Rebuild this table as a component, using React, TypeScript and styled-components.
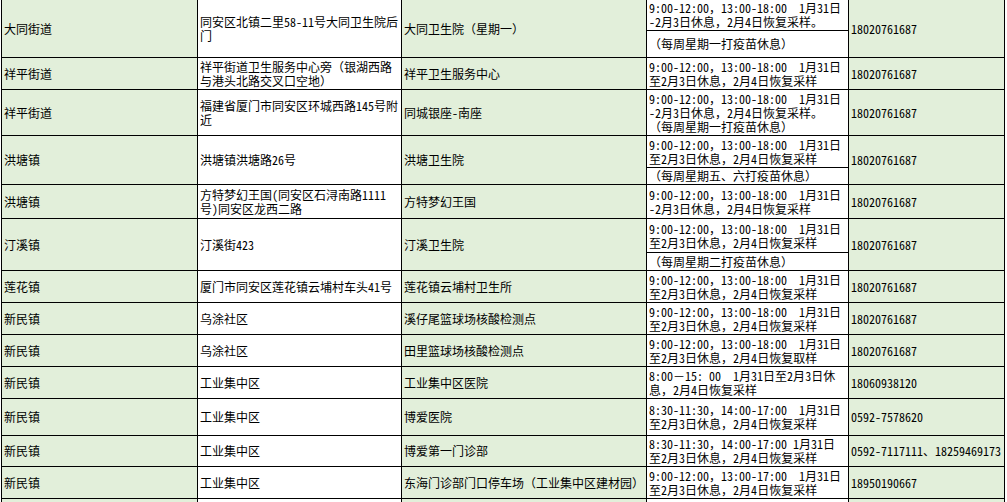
import React from "react";
import styled, { createGlobalStyle } from "styled-components";

const Global = createGlobalStyle`
  html, body {
    margin: 0;
    padding: 0;
    background: #ffffff;
    overflow: hidden;
    height: 100%;
  }
  #root {
    height: 100%;
    overflow: hidden;
  }
`;

type Row = {
  h: number;
  area: string;
  addr: string[];
  site: string[];
  time: string[];
  note?: string;
  noteH?: number;
  phone: string;
};

const T1 = "9:00-12:00，13:00-18:00\u00a0\u00a01月31日";
const TO = "至2月3日休息，2月4日恢复采样";
const DASH = "-2月3日休息，2月4日恢复采样";

const rows: Row[] = [
  {
    h: 57,
    area: "大同街道",
    addr: ["同安区北镇二里58-11号大同卫生院后", "门"],
    site: ["大同卫生院（星期一）"],
    time: [T1, DASH + "。"],
    note: "（每周星期一打疫苗休息）",
    noteH: 26,
    phone: "18020761687",
  },
  {
    h: 31,
    area: "祥平街道",
    addr: ["祥平街道卫生服务中心旁（银湖西路", "与港头北路交叉口空地）"],
    site: ["祥平卫生服务中心"],
    time: [T1, TO],
    phone: "18020761687",
  },
  {
    h: 45,
    area: "祥平街道",
    addr: ["福建省厦门市同安区环城西路145号附", "近"],
    site: ["同城银座-南座"],
    time: [T1, DASH + "。", "（每周星期一打疫苗休息）"],
    phone: "18020761687",
  },
  {
    h: 48,
    area: "洪塘镇",
    addr: ["洪塘镇洪塘路26号"],
    site: ["洪塘卫生院"],
    time: [T1, TO],
    note: "（每周星期五、六打疫苗休息）",
    noteH: 16,
    phone: "18020761687",
  },
  {
    h: 33,
    area: "洪塘镇",
    addr: ["方特梦幻王国(同安区石浔南路1111", "号)同安区龙西二路"],
    site: ["方特梦幻王国"],
    time: [T1, DASH],
    phone: "18020761687",
  },
  {
    h: 51,
    area: "汀溪镇",
    addr: ["汀溪街423"],
    site: ["汀溪卫生院"],
    time: [T1, TO],
    note: "（每周星期二打疫苗休息）",
    noteH: 17,
    phone: "18020761687",
  },
  {
    h: 31,
    area: "莲花镇",
    addr: ["厦门市同安区莲花镇云埔村车头41号"],
    site: ["莲花镇云埔村卫生所"],
    time: [T1, TO],
    phone: "18020761687",
  },
  {
    h: 31,
    area: "新民镇",
    addr: ["乌涂社区"],
    site: ["溪仔尾篮球场核酸检测点"],
    time: [T1, TO],
    phone: "18020761687",
  },
  {
    h: 31,
    area: "新民镇",
    addr: ["乌涂社区"],
    site: ["田里篮球场核酸检测点"],
    time: [T1, "至2月3日休息，2月4日恢复取样"],
    phone: "18020761687",
  },
  {
    h: 31,
    area: "新民镇",
    addr: ["工业集中区"],
    site: ["工业集中区医院"],
    time: ["8:00－15:\u00a000\u00a0\u00a01月31日至2月3日休", "息，2月4日恢复采样"],
    phone: "18060938120",
  },
  {
    h: 36,
    area: "新民镇",
    addr: ["工业集中区"],
    site: ["博爱医院"],
    time: ["8:30-11:30，14:00-17:00\u00a0\u00a01月31日", TO],
    phone: "0592-7578620",
  },
  {
    h: 30,
    area: "新民镇",
    addr: ["工业集中区"],
    site: ["博爱第一门诊部"],
    time: ["8:30-11:30，14:00-17:00\u00a01月31日", TO],
    phone: "0592-7117111、18259469173",
  },
  {
    h: 31,
    area: "新民镇",
    addr: ["工业集中区"],
    site: ["东海门诊部门口停车场（工业集中区建材园）"],
    time: ["9:00-12:00，13:00-17:00\u00a0\u00a01月31日", TO],
    phone: "18950190667",
  },
  {
    h: 30,
    area: "",
    addr: [],
    site: [],
    time: [],
    phone: "",
  },
];

const Sheet = styled.div<{ $rows: string }>`
  display: grid;
  grid-template-columns: 195px 203px 244px 201px 155px;
  grid-template-rows: ${(p) => p.$rows};
  gap: 1px;
  padding: 1px;
  background: #000000;
  width: max-content;
  margin: -1px 0 0 1px;
  font-family: "Noto Sans CJK SC", "Noto Sans", sans-serif;
  font-size: 12px;
  line-height: 14px;
  color: #000000;
`;

const Cell = styled.div<{ $green?: boolean }>`
  background: ${(p) => (p.$green ? "#E2EFDA" : "#FFFFFF")};
  display: flex;
  flex-direction: column;
  justify-content: center;
  align-items: flex-start;
  padding: 0 1px 0 2px;
  overflow: hidden;
  white-space: nowrap;
  min-width: 0;
  min-height: 0;
`;

const TimeCell = styled.div`
  background: #ffffff;
  display: flex;
  flex-direction: column;
  overflow: hidden;
  min-height: 0;
  white-space: nowrap;
`;

const TimeMain = styled.div`
  flex: 1;
  display: flex;
  flex-direction: column;
  justify-content: center;
  padding: 0 1px 0 2px;
  overflow: hidden;
`;

const TimeNote = styled.div<{ $h: number }>`
  height: ${(p) => p.$h}px;
  flex: none;
  border-top: 1px solid #000000;
  display: flex;
  align-items: center;
  padding: 0 1px 0 2px;
  overflow: hidden;
`;

const Line = styled.span`
  display: block;
`;

const Half = styled.span`
  font-feature-settings: "hwid" 1;
`;

const Text = ({ value }: { value: string }) => {
  const parts = value.split(/([\u0020-\u007e\u00a0]+)/).filter((s) => s !== "");
  return (
    <>
      {parts.map((p, i) =>
        /^[\u0020-\u007e\u00a0]+$/.test(p) ? <Half key={i}>{p}</Half> : <React.Fragment key={i}>{p}</React.Fragment>
      )}
    </>
  );
};

const Lines = ({ items }: { items: string[] }) => (
  <>
    {items.map((t, i) => (
      <Line key={i}>
        <Text value={t} />
      </Line>
    ))}
  </>
);

export default function App() {
  const template = rows.map((r) => `${r.h}px`).join(" ");
  return (
    <>
      <Global />
      <Sheet $rows={template}>
        {rows.map((r, i) => (
          <React.Fragment key={i}>
            <Cell $green>
              <Line>{r.area}</Line>
            </Cell>
            <Cell>
              <Lines items={r.addr} />
            </Cell>
            <Cell $green>
              <Lines items={r.site} />
            </Cell>
            <TimeCell>
              <TimeMain>
                <Lines items={r.time} />
              </TimeMain>
              {r.note && (
                <TimeNote $h={r.noteH ?? 16}>
                  <Text value={r.note} />
                </TimeNote>
              )}
            </TimeCell>
            <Cell $green>
              <Lines items={r.phone ? [r.phone] : []} />
            </Cell>
          </React.Fragment>
        ))}
      </Sheet>
    </>
  );
}
